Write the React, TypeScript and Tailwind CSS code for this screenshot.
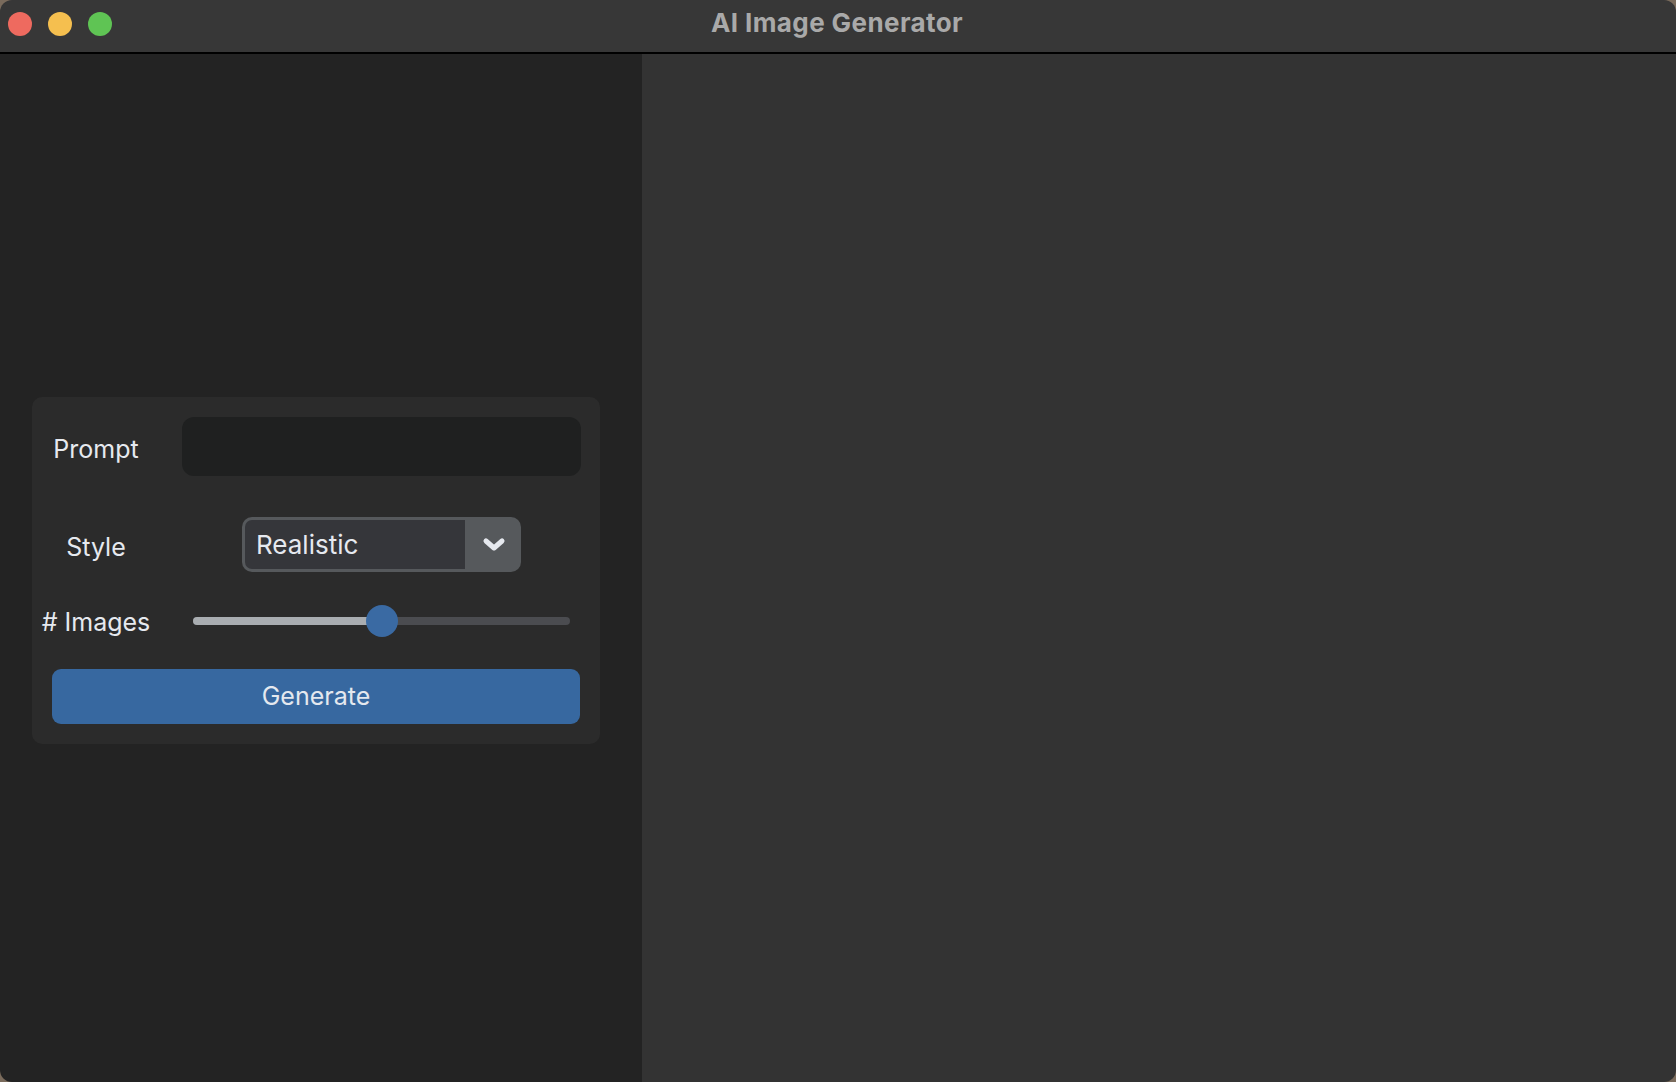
import React from "react";

// small helper for the labels on the left of the form
function FieldLabel({ children }: { children: React.ReactNode }) {
  return (
    <div className="w-[112px] shrink-0 text-center text-[25px] leading-none text-[#e6e9ef]">
      {children}
    </div>
  );
}

export default function App() {
  const count = 0.5; // slider position, 0..1

  return (
    <div
      className="w-[1676px] h-[1082px] bg-[#7a6b5c] overflow-hidden"
      style={{ fontFamily: "Inter, 'Open Sans', sans-serif" }}
    >
      <div className="w-full h-full rounded-[12px] overflow-hidden flex flex-col">
        {/* title bar */}
        <div className="relative h-[54px] shrink-0 bg-[#373737] border-b-2 border-black flex items-center justify-center">
          <div className="absolute left-[8px] top-[12px] flex gap-[16px]">
            <span className="w-[24px] h-[24px] rounded-full bg-[#ee6a5f]" />
            <span className="w-[24px] h-[24px] rounded-full bg-[#f5bf4f]" />
            <span className="w-[24px] h-[24px] rounded-full bg-[#5fc454]" />
          </div>
          <span className="ml-[-2px] mt-[-8px] text-[26px] font-bold text-[#a9a9a9] tracking-[0.4px]">
            AI Image Generator
          </span>
        </div>

        <div className="flex flex-1">
          {/* sidebar */}
          <div className="w-[642px] shrink-0 bg-[#232323] flex items-center pt-[4px]">
            <div className="ml-[32px] w-[568px] rounded-[10px] bg-[#2b2b2b] px-[8px] pt-[20px] pb-[20px] flex flex-col">
              <div className="flex items-center h-[59px]">
                <FieldLabel>
                  <span className="relative top-[3px]">Prompt</span>
                </FieldLabel>
                <div className="ml-[30px] w-[399px] h-[59px] rounded-[12px] bg-[#1f2020]" />
              </div>

              <div className="flex items-center h-[55px] mt-[41px]">
                <FieldLabel>
                  <span className="relative top-[3px]">Style</span>
                </FieldLabel>
                <div className="ml-[30px] w-[399px] flex justify-center">
                  <div className="w-[279px] h-[55px] rounded-[10px] bg-[#56595c] p-[3px] flex">
                    <div className="flex-1 bg-[#35363a] rounded-l-[7px] flex items-center pl-[11px] text-[26px] text-[#e6e9ef]">
                      Realistic
                    </div>
                    <div className="w-[53px] flex items-center justify-center pl-[5px]">
                      <svg width="26" height="18" viewBox="0 0 26 18">
                        <polyline
                          points="5,6 13,13 21,6"
                          fill="none"
                          stroke="#e6e9ef"
                          strokeWidth="5"
                          strokeLinecap="round"
                          strokeLinejoin="round"
                        />
                      </svg>
                    </div>
                  </div>
                </div>
              </div>

              <div className="flex items-center h-[32px] mt-[33px]">
                <FieldLabel>
                  <span className="relative top-[2px]"># Images</span>
                </FieldLabel>
                <div className="ml-[41px] w-[377px] relative h-[32px] flex items-center">
                  <div className="w-full h-[8px] rounded-full bg-[#4b4c50] overflow-hidden">
                    <div className="h-full bg-[#a9adb1]" style={{ width: `${count * 100}%` }} />
                  </div>
                  <div
                    className="absolute top-0 w-[32px] h-[32px] rounded-full bg-[#3a6aa3] -translate-x-1/2"
                    style={{ left: `${count * 100}%` }}
                  />
                </div>
              </div>

              <button className="mt-[32px] mx-[12px] h-[55px] rounded-[9px] bg-[#3768a0] text-[25px] text-[#e4e8ef] pt-[2px]">
                Generate
              </button>
            </div>
          </div>

          {/* image area */}
          <div className="flex-1 bg-[#333333]" />
        </div>
      </div>
    </div>
  );
}
